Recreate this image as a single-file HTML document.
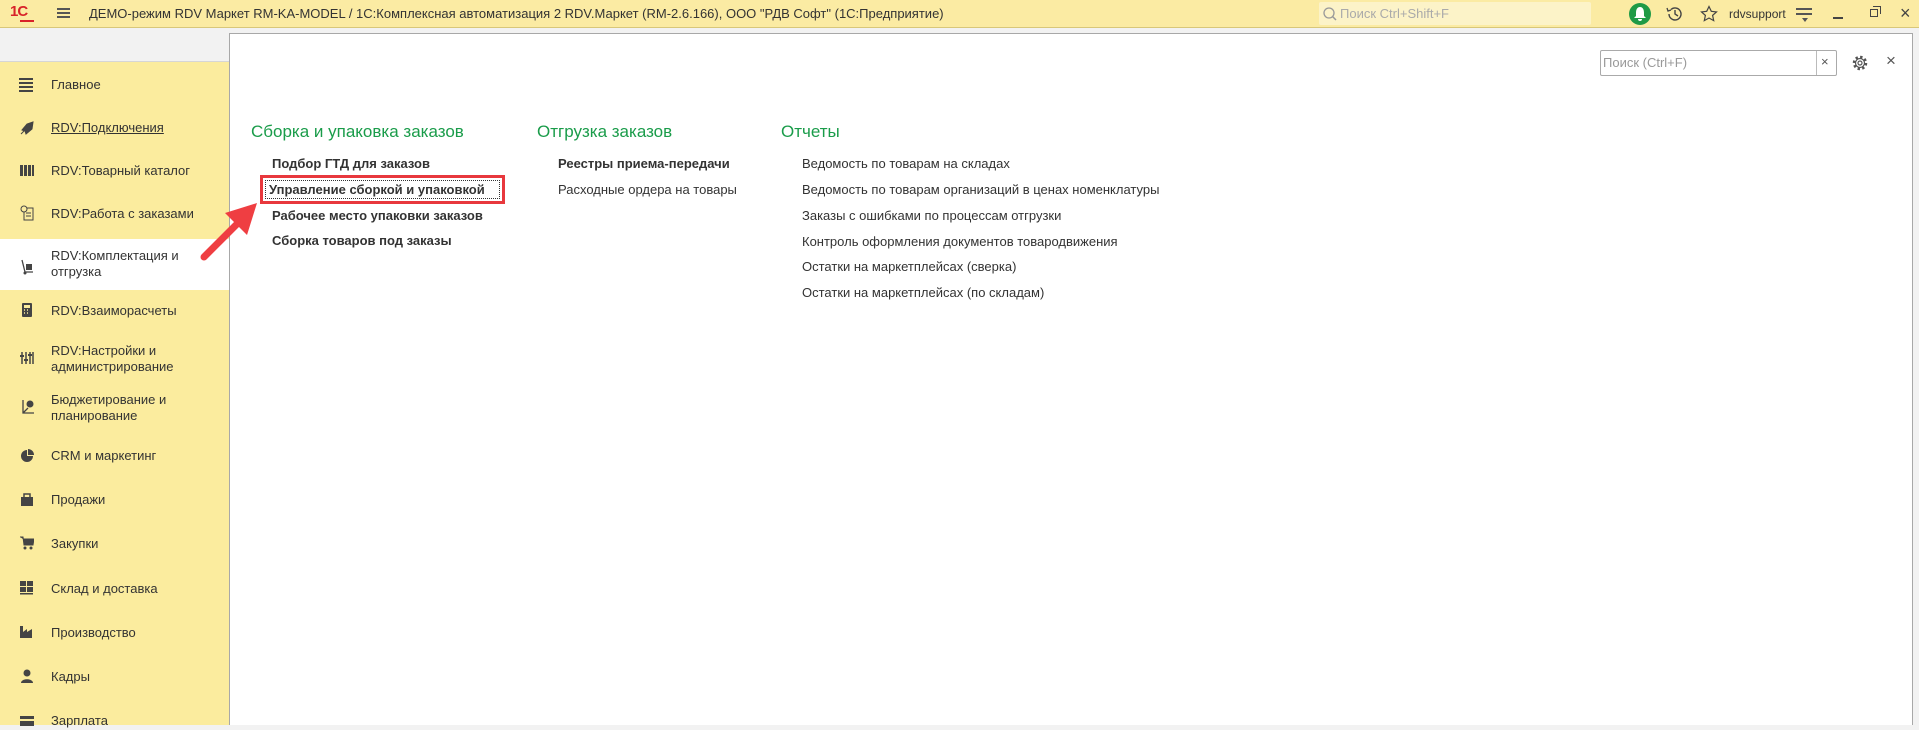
<!DOCTYPE html>
<html><head><meta charset="utf-8"><style>
*{margin:0;padding:0;box-sizing:border-box}
body{width:1919px;height:725px;overflow:hidden;background:#f2f2f2;font-family:"Liberation Sans",Arial,sans-serif;color:#333;position:relative}
.top{position:absolute;left:0;top:0;width:1919px;height:28px;background:#fbeba3;border-bottom:1px solid #d8c77a}
.t{position:absolute;white-space:nowrap}
.side{position:absolute;left:0;top:61px;width:229px;height:664px;background:#fbec9e;border-top:1px solid #d6d6d6}
.si{position:absolute;left:51px;font-size:13px;color:#333;line-height:16px}
.ic{position:absolute;left:20px;width:14px;height:14px}
.panel{position:absolute;left:229px;top:33px;width:1684px;height:692px;background:#fff;border-left:1px solid #a8a8a8;border-top:1px solid #a8a8a8;border-right:1px solid #a8a8a8}
.h{position:absolute;font-size:17px;color:#1a9c4a}
.b{position:absolute;font-size:13px;font-weight:bold;color:#333;white-space:nowrap}
.n{position:absolute;font-size:13px;color:#333;white-space:nowrap}
</style></head><body>
<div class="top">
 <div class="t" style="left:10px;top:3px;font-size:15px;font-weight:bold;color:#d8232a;letter-spacing:-1px">1С</div>
 <div style="position:absolute;left:20px;top:20px;width:14px;height:2px;background:#d8232a"></div>
 <div style="position:absolute;left:57px;top:8px;width:13px;height:2px;background:#555;box-shadow:0 4px 0 #555,0 8px 0 #555"></div>
 <div class="t" style="left:89px;top:6px;font-size:13px;color:#333">ДЕМО-режим RDV Маркет RM-KA-MODEL / 1С:Комплексная автоматизация 2 RDV.Маркет (RM-2.6.166), ООО "РДВ Софт"  (1С:Предприятие)</div>
 <div style="position:absolute;left:1319px;top:2px;width:272px;height:23px;background:#fcf3c8;border-radius:2px"></div>
 <svg style="position:absolute;left:1322px;top:6px" width="16" height="16"><circle cx="7" cy="7" r="5" fill="none" stroke="#999" stroke-width="1.3"/><line x1="10.5" y1="10.5" x2="14" y2="14" stroke="#999" stroke-width="1.5"/></svg>
 <div class="t" style="left:1340px;top:6px;font-size:13px;color:#aaa">Поиск Ctrl+Shift+F</div>
 <div style="position:absolute;left:1629px;top:3px;width:22px;height:22px;border-radius:11px;background:#1f9a46"></div>
 <svg style="position:absolute;left:1633px;top:6px" width="14" height="16"><path d="M7 1C4 1 3 4 3 7v3L1 12h12l-2-2V7c0-3-1-6-4-6zM5 13a2 2 0 0 0 4 0z" fill="#fff"/></svg>
 <svg style="position:absolute;left:1665px;top:5px" width="18" height="18"><path d="M4 9a6 6 0 1 0 2-4.5" fill="none" stroke="#444" stroke-width="1.4"/><path d="M2 3l1 3 3-1" fill="none" stroke="#444" stroke-width="1.3"/><path d="M10 5v4l3 2" fill="none" stroke="#444" stroke-width="1.4"/></svg>
 <svg style="position:absolute;left:1700px;top:5px" width="18" height="18"><path d="M9 1.5l2.3 4.8 5.2.6-3.9 3.5 1.1 5.2L9 13l-4.7 2.6 1.1-5.2L1.5 6.9l5.2-.6z" fill="none" stroke="#444" stroke-width="1.2"/></svg>
 <div class="t" style="left:1729px;top:7px;font-size:12px;color:#333">rdvsupport</div>
 <div style="position:absolute;left:1796px;top:8px;width:16px;height:1.5px;background:#555;box-shadow:0 5px 0 #555"></div>
 <div style="position:absolute;left:1802px;top:18px;border:3px solid transparent;border-top:4px solid #555"></div>
 <div style="position:absolute;left:1833px;top:17px;width:10px;height:1.5px;background:#444"></div>
 <div style="position:absolute;left:1870px;top:9px;width:8px;height:8px;border:1.3px solid #444;background:#fbeba3"></div>
 <div style="position:absolute;left:1873px;top:6px;width:8px;height:8px;border-top:1.3px solid #444;border-right:1.3px solid #444"></div>
 <div class="t" style="left:1900px;top:3px;font-size:18px;color:#444">×</div>
</div>
<div class="side">
 <div class="ic" style="top:16px;left:19px;width:14px;height:2px;background:#444;box-shadow:0 4px 0 #444,0 8px 0 #444,0 12px 0 #444"></div><div class="si" style="top:15px">Главное</div>
 <svg class="ic" style="top:59px"><path d="M13 1L7 3 2 9l3 1 1 3 6-5z M1 13l3-3" fill="#444" stroke="#444"/></svg><div class="si" style="top:58px;text-decoration:underline">RDV:Подключения</div>
 <div class="ic" style="top:103px;height:11px;background:repeating-linear-gradient(90deg,#444 0 3px,#fbec9e 3px 4px)"></div><div class="si" style="top:101px">RDV:Товарный каталог</div>
 <svg class="ic" style="top:143px;height:16px"><rect x="4" y="3" width="9" height="12" fill="none" stroke="#444"/><circle cx="4" cy="4" r="3" fill="#fbec9e" stroke="#444"/><path d="M6 8h5M6 11h5" stroke="#444"/></svg><div class="si" style="top:144px">RDV:Работа с заказами</div>
 <div style="position:absolute;left:0;top:177px;width:229px;height:51px;background:#fff"></div>
 <svg class="ic" style="top:197px;height:16px"><path d="M2 1l3 12h8" fill="none" stroke="#444" stroke-width="1.3"/><rect x="6" y="5" width="6" height="6" fill="#444"/><circle cx="5" cy="14" r="1.5" fill="#444"/></svg><div class="si" style="top:186px">RDV:Комплектация и<br>отгрузка</div>
 <svg class="ic" style="top:241px"><rect x="2" y="0" width="10" height="14" rx="1" fill="#444"/><rect x="4" y="2" width="6" height="3" fill="#fbec9e"/><path d="M4 7h1M7 7h1M4 10h1M7 10h1" stroke="#fbec9e" stroke-width="1.5"/></svg><div class="si" style="top:241px">RDV:Взаиморасчеты</div>
 <svg class="ic" style="top:289px"><path d="M2 1v12M6 1v12M10 1v12M13 1v12" stroke="#444" stroke-width="1.5"/><path d="M0 5h4M4 9h4M8 4h4" stroke="#444" stroke-width="2"/></svg><div class="si" style="top:281px">RDV:Настройки и<br>администрирование</div>
 <svg class="ic" style="top:337px;height:16px"><path d="M3 1v13h12M3 14l5-5" stroke="#444" fill="none" stroke-width="1.3"/><circle cx="10" cy="5" r="3.5" fill="#444"/></svg><div class="si" style="top:330px">Бюджетирование и<br>планирование</div>
 <svg class="ic" style="top:387px"><path d="M7 1a6 6 0 1 0 6 6H7z" fill="#444"/><path d="M8 0v6h6A6 6 0 0 0 8 0z" fill="#444"/></svg><div class="si" style="top:386px">CRM и маркетинг</div>
 <svg class="ic" style="top:430px"><path d="M1 5h12v9H1z" fill="#444"/><path d="M4 5V2h6v3" fill="none" stroke="#444" stroke-width="1.5"/></svg><div class="si" style="top:430px">Продажи</div>
 <svg class="ic" style="top:474px"><path d="M0 1h3l1 8h9l1-6H3" fill="#444" stroke="#444"/><circle cx="5" cy="12" r="1.5" fill="#444"/><circle cx="11" cy="12" r="1.5" fill="#444"/></svg><div class="si" style="top:474px">Закупки</div>
 <svg class="ic" style="top:519px"><rect x="0" y="0" width="6" height="5" fill="#444"/><rect x="7" y="0" width="6" height="5" fill="#444"/><rect x="0" y="6" width="6" height="5" fill="#444"/><rect x="7" y="6" width="6" height="5" fill="#444"/><rect x="0" y="12" width="13" height="1.5" fill="#444"/></svg><div class="si" style="top:519px">Склад и доставка</div>
 <svg class="ic" style="top:563px"><path d="M0 13V1h3v6l4-3v3l5-3v9z" fill="#444"/></svg><div class="si" style="top:563px">Производство</div>
 <svg class="ic" style="top:607px"><circle cx="7" cy="4" r="3.5" fill="#444"/><path d="M1 14c0-5 12-5 12 0z" fill="#444"/></svg><div class="si" style="top:607px">Кадры</div>
 <svg class="ic" style="top:654px"><rect x="0" y="0" width="14" height="10" fill="#444"/><rect x="0" y="3" width="14" height="2" fill="#fbec9e"/></svg><div class="si" style="top:651px">Зарплата</div>
</div>
<div class="panel">
 <div style="position:absolute;left:1370px;top:16px;width:237px;height:26px;border:1px solid #aaa;border-radius:2px"></div>
 <div style="position:absolute;left:1586px;top:17px;width:1px;height:24px;background:#bbb"></div>
 <div class="t" style="left:1373px;top:21px;font-size:13px;color:#999">Поиск (Ctrl+F)</div>
 <div class="t" style="left:1591px;top:20px;font-size:13px;color:#555">×</div>
 <svg style="position:absolute;left:1621px;top:20px" width="18" height="18"><circle cx="9" cy="9" r="6" fill="none" stroke="#555" stroke-width="2.5" stroke-dasharray="2.4 2.3"/><circle cx="9" cy="9" r="4.5" fill="none" stroke="#555" stroke-width="1.2"/><circle cx="9" cy="9" r="2" fill="none" stroke="#555" stroke-width="1.2"/></svg>
 <div class="t" style="left:1656px;top:17px;font-size:17px;color:#555">×</div>

 <div class="h" style="left:21px;top:88px">Сборка и упаковка заказов</div>
 <div class="h" style="left:307px;top:88px">Отгрузка заказов</div>
 <div class="h" style="left:551px;top:88px">Отчеты</div>

 <div class="b" style="left:42px;top:122px">Подбор ГТД для заказов</div>
 <div style="position:absolute;left:30px;top:141px;width:245px;height:29px;border:3px solid #e8383d"></div>
 <div style="position:absolute;left:35px;top:146px;width:235px;height:19px;border:1px dotted #333"></div>
 <div class="b" style="left:39px;top:148px">Управление сборкой и упаковкой</div>
 <div class="b" style="left:42px;top:174px">Рабочее место упаковки заказов</div>
 <div class="b" style="left:42px;top:199px">Сборка товаров под заказы</div>

 <div class="b" style="left:328px;top:122px">Реестры приема-передачи</div>
 <div class="n" style="left:328px;top:148px">Расходные ордера на товары</div>

 <div class="n" style="left:572px;top:122px">Ведомость по товарам на складах</div>
 <div class="n" style="left:572px;top:148px">Ведомость по товарам организаций в ценах номенклатуры</div>
 <div class="n" style="left:572px;top:174px">Заказы с ошибками по процессам отгрузки</div>
 <div class="n" style="left:572px;top:200px">Контроль оформления документов товародвижения</div>
 <div class="n" style="left:572px;top:225px">Остатки на маркетплейсах (сверка)</div>
 <div class="n" style="left:572px;top:251px">Остатки на маркетплейсах (по складам)</div>
</div>
<svg style="position:absolute;left:190px;top:195px" width="80" height="75"><line x1="14" y1="62" x2="52" y2="24" stroke="#ef3e42" stroke-width="7" stroke-linecap="round"/><path d="M67 8L35 18 57 40z" fill="#ef3e42"/></svg>
</body></html>
